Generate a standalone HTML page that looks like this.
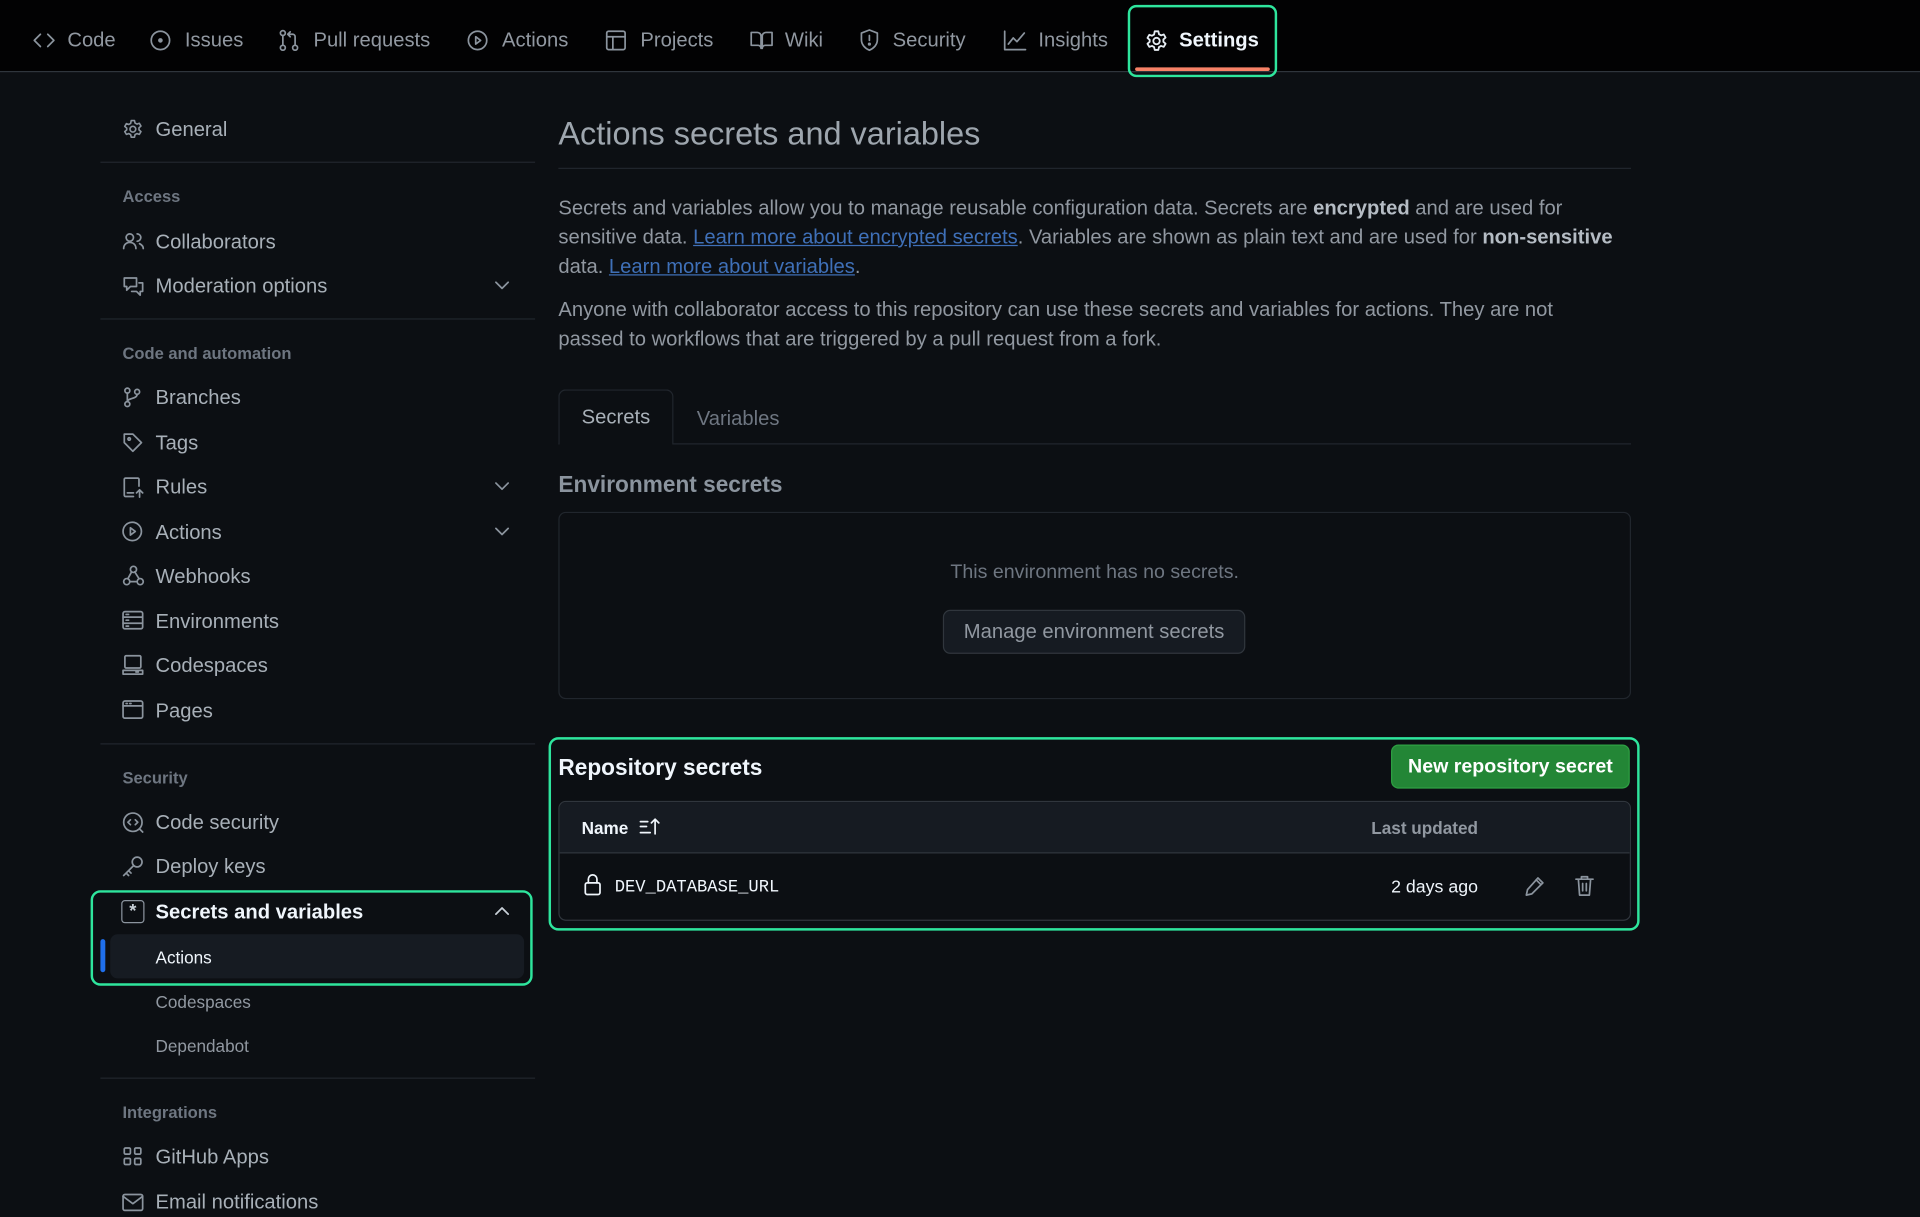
<!DOCTYPE html>
<html><head><meta charset="utf-8"><style>
*{box-sizing:border-box;margin:0;padding:0}
html,body{width:1920px;height:1200px;overflow:hidden;background:#0c0f13}
#w{position:absolute;left:0;top:0;width:1568px;height:980px;transform:scale(1.22449);transform-origin:0 0;background:#0c0f13;font-family:"Liberation Sans",sans-serif;color:#9198a1;font-size:16px}
.a{position:absolute;white-space:nowrap}
.nav{position:absolute;left:0;top:0;width:1568px;height:59px;background:#020203;border-bottom:1px solid #30363d}
.ni{position:absolute;top:21px;height:24px;line-height:24px;font-size:16.5px;color:#9198a1}
svg{position:absolute;fill:none;stroke:#8b949e;stroke-width:1.4;stroke-linecap:round;stroke-linejoin:round}
.si{position:absolute;left:127px;height:24px;line-height:24px;font-size:16.5px;color:#a8b0b8}
.sh{position:absolute;left:100px;font-size:13.5px;color:#6e7681;font-weight:bold;height:20px;line-height:20px}
.dv{position:absolute;left:82px;width:355px;height:1px;background:#21262d}
.sub{position:absolute;left:127px;font-size:14px;color:#9198a1;height:20px;line-height:20px}
.ch{position:absolute;left:403px}
p.t{position:absolute;left:456px;width:880px;line-height:24px;font-size:16.5px;color:#9198a1}
p.t b{color:#b5bcc4}
a{color:#3f70b8;text-decoration:underline}
</style></head><body><div id="w">
<div class="nav"></div>
<svg style="left:27px;top:25px" width="18" height="16" viewBox="0 0 18 16"><path d="M6 3L1 8l5 5M12 3l5 5-5 5"/></svg>
<div class="ni" style="left:55px">Code</div>
<svg style="left:122px;top:24px" width="18" height="18" viewBox="0 0 18 18"><circle cx="9" cy="9" r="7.5"/><circle cx="9" cy="9" r="1.2" fill="#8b949e"/></svg>
<div class="ni" style="left:151px">Issues</div>
<svg style="left:227px;top:24px" width="18" height="18" viewBox="0 0 18 18"><circle cx="4" cy="3" r="2"/><circle cx="4" cy="15" r="2"/><circle cx="14" cy="15" r="2"/><path d="M4 5v8M14 13V6a2 2 0 0 0-2-2H9M10 2L8 4l2 2"/></svg>
<div class="ni" style="left:256px">Pull requests</div>
<svg style="left:381px;top:24px" width="18" height="18" viewBox="0 0 18 18"><circle cx="9" cy="9" r="7.5"/><path d="M7.5 6v6l4-3z"/></svg>
<div class="ni" style="left:410px">Actions</div>
<svg style="left:494px;top:24px" width="18" height="18" viewBox="0 0 18 18"><rect x="1.5" y="1.5" width="15" height="15" rx="1.5"/><path d="M1.5 6h15M6.5 6v10.5"/></svg>
<div class="ni" style="left:523px">Projects</div>
<svg style="left:612px;top:24px" width="20" height="18" viewBox="0 0 20 18"><path d="M1.5 2.5h5a3 3 0 0 1 3 3v10a2.5 2.5 0 0 0-2.5-2.5h-5.5zM18.5 2.5h-5a3 3 0 0 0-3 3v10a2.5 2.5 0 0 1 2.5-2.5h5.5z"/></svg>
<div class="ni" style="left:641px">Wiki</div>
<svg style="left:701px;top:23px" width="18" height="20" viewBox="0 0 18 20"><path d="M9 1.5l6.5 2.5v5.5c0 4-3 7-6.5 8.5-3.5-1.5-6.5-4.5-6.5-8.5V4z M9 6v4"/><circle cx="9" cy="13" r=".6" fill="#8b949e"/></svg>
<div class="ni" style="left:729px">Security</div>
<svg style="left:819px;top:24px" width="20" height="18" viewBox="0 0 20 18"><path d="M1.5 1.5v15h17M4.5 12l4-5 3 3 6-7"/></svg>
<div class="ni" style="left:848px">Insights</div>
<div class="a" style="left:921px;top:4px;width:122px;height:59px;border:2px solid #2ee59d;border-radius:7px"></div>
<div class="a" style="left:927px;top:55px;width:110px;height:3px;background:#f78166;border-radius:2px"></div>
<svg style="left:935px;top:24px" width="19" height="19" viewBox="0 0 18 18"><circle cx="9" cy="9" r="2.5" stroke="#e6edf3"/><path stroke="#e6edf3" d="M7.6 1.5h2.8l.5 2.2 1.6.9 2.1-.7 1.4 2.4-1.7 1.5v1.8l1.7 1.5-1.4 2.4-2.1-.7-1.6.9-.5 2.2H7.6l-.5-2.2-1.6-.9-2.1.7-1.4-2.4 1.7-1.5V8.1L2 6.6l1.4-2.4 2.1.7 1.6-.9z"/></svg>
<div class="ni" style="left:963px;color:#f0f6fc;font-weight:bold">Settings</div>

<svg style="left:100px;top:97px" width="17" height="17" viewBox="0 0 18 18"><circle cx="9" cy="9" r="2.5"/><path d="M7.6 1.5h2.8l.5 2.2 1.6.9 2.1-.7 1.4 2.4-1.7 1.5v1.8l1.7 1.5-1.4 2.4-2.1-.7-1.6.9-.5 2.2H7.6l-.5-2.2-1.6-.9-2.1.7-1.4-2.4 1.7-1.5V8.1L2 6.6l1.4-2.4 2.1.7 1.6-.9z"/></svg>
<div class="si" style="top:94px">General</div>
<div class="dv" style="top:132px"></div>
<div class="sh" style="top:151px">Access</div>
<svg style="left:100px;top:189px" width="18" height="16" viewBox="0 0 18 16"><circle cx="6" cy="5" r="3"/><path d="M1 14c0-3 2-5 5-5s5 2 5 5M12 2a3 3 0 0 1 0 6M14 10c2 1 3 2 3 4"/></svg>
<div class="si" style="top:186px">Collaborators</div>
<svg style="left:100px;top:225px" width="18" height="17" viewBox="0 0 18 17"><path d="M1.5 2h10v7h-5l-3 3V9h-2zM13.5 6h3v7h-2v3l-3-3h-4"/></svg>
<div class="si" style="top:222px">Moderation options</div>
<svg class="ch" style="top:228px" width="14" height="10" viewBox="0 0 14 10"><path d="M2 2.5l5 5 5-5"/></svg>
<div class="dv" style="top:260px"></div>
<div class="sh" style="top:279px">Code and automation</div>
<svg style="left:100px;top:316px" width="16" height="17" viewBox="0 0 16 17"><circle cx="4" cy="3" r="2"/><circle cx="4" cy="14" r="2"/><circle cx="12" cy="4" r="2"/><path d="M4 5v7M12 6c0 4-8 3-8 6"/></svg>
<div class="si" style="top:313px">Branches</div>
<svg style="left:100px;top:353px" width="17" height="17" viewBox="0 0 17 17"><path d="M1.5 1.5h7l7 7-7 7-7-7z"/><circle cx="5.5" cy="5.5" r="1"/></svg>
<div class="si" style="top:350px">Tags</div>
<svg style="left:100px;top:389px" width="18" height="18" viewBox="0 0 18 18"><path d="M9 16.5H2.5a1 1 0 0 1-1-1v-13a1 1 0 0 1 1-1h10a1 1 0 0 1 1 1V8M4 13.5h5M14 11v6M11.5 13.5L14 11l2.5 2.5"/></svg>
<div class="si" style="top:386px">Rules</div>
<svg class="ch" style="top:392px" width="14" height="10" viewBox="0 0 14 10"><path d="M2 2.5l5 5 5-5"/></svg>
<svg style="left:99px;top:425px" width="18" height="18" viewBox="0 0 18 18"><circle cx="9" cy="9" r="7.5"/><path d="M7.5 6v6l4-3z"/></svg>
<div class="si" style="top:423px">Actions</div>
<svg class="ch" style="top:429px" width="14" height="10" viewBox="0 0 14 10"><path d="M2 2.5l5 5 5-5"/></svg>
<svg style="left:100px;top:461px" width="18" height="18" viewBox="0 0 18 18"><circle cx="9" cy="4" r="2.5"/><circle cx="3.5" cy="14" r="2.5"/><circle cx="14.5" cy="14" r="2.5"/><path d="M7.5 6L4.5 11.5M11 14H6M10 6l3.5 5.5"/></svg>
<div class="si" style="top:459px">Webhooks</div>
<svg style="left:99px;top:498px" width="19" height="17" viewBox="0 0 19 17"><rect x="1.5" y="1.5" width="16" height="14" rx="1.5"/><path d="M1.5 6h16M1.5 11h16M4 3.8h2M4 8.5h2M4 13.3h2"/></svg>
<div class="si" style="top:496px">Environments</div>
<svg style="left:99px;top:534px" width="19" height="18" viewBox="0 0 19 18"><rect x="3" y="1.5" width="13" height="10" rx="1"/><path d="M1.5 16.5h16v-3h-16zM12 14.8h2"/></svg>
<div class="si" style="top:532px">Codespaces</div>
<svg style="left:99px;top:571px" width="19" height="17" viewBox="0 0 19 17"><rect x="1.5" y="1.5" width="16" height="14" rx="1.5"/><path d="M1.5 5.5h16M4 3.5h1M7 3.5h1"/></svg>
<div class="si" style="top:569px">Pages</div>
<div class="dv" style="top:607px"></div>
<div class="sh" style="top:626px">Security</div>
<svg style="left:99px;top:662px" width="19" height="19" viewBox="0 0 19 19"><circle cx="9.5" cy="9.5" r="7.5"/><path d="M7.5 7.5l-2 2 2 2M11.5 7.5l2 2-2 2M15 15l2.5 2.5"/></svg>
<div class="si" style="top:660px">Code security</div>
<svg style="left:99px;top:698px" width="19" height="19" viewBox="0 0 19 19"><circle cx="13" cy="6" r="4"/><path d="M10 9l-8 8M4 15l2 2M6 13l2 2"/></svg>
<div class="si" style="top:696px">Deploy keys</div>
<div class="a" style="left:74px;top:727px;width:361px;height:78px;border:2px solid #2ee59d;border-radius:8px"></div>
<div class="a" style="left:90px;top:763px;width:338px;height:36px;background:#161b22;border-radius:6px"></div>
<div class="a" style="left:82px;top:767px;width:4px;height:27px;background:#1f6feb;border-radius:2px"></div>
<div class="a" style="left:99px;top:735px;width:19px;height:19px;border:1.5px solid #8b949e;border-radius:3px;color:#c9d1d9;font-size:15px;line-height:18px;text-align:center;font-weight:bold">*</div>
<div class="si" style="top:733px;color:#f0f6fc;font-weight:bold">Secrets and variables</div>
<svg class="ch" style="top:739px" width="14" height="10" viewBox="0 0 14 10"><path d="M2 7.5l5-5 5 5" stroke="#c9d1d9"/></svg>
<div class="sub" style="top:772px;color:#f0f6fc">Actions</div>
<div class="sub" style="top:808px">Codespaces</div>
<div class="sub" style="top:844px">Dependabot</div>
<div class="dv" style="top:880px"></div>
<div class="sh" style="top:899px">Integrations</div>
<svg style="left:100px;top:936px" width="17" height="17" viewBox="0 0 17 17"><rect x="1.5" y="1.5" width="5" height="5" rx="1"/><rect x="10" y="1.5" width="5" height="5" rx="1"/><rect x="1.5" y="10" width="5" height="5" rx="1"/><rect x="10" y="10" width="5" height="5" rx="1"/></svg>
<div class="si" style="top:933px">GitHub Apps</div>
<svg style="left:99px;top:974px" width="19" height="16" viewBox="0 0 19 16"><rect x="1.5" y="1.5" width="16" height="13" rx="1.5"/><path d="M1.5 3l8 6 8-6"/></svg>
<div class="si" style="top:970px">Email notifications</div>

<div class="a" style="left:456px;top:92px;font-size:26.5px;color:#9ea6ae;line-height:34px">Actions secrets and variables</div>
<div class="a" style="left:456px;top:137px;width:876px;height:1px;background:#21262d"></div>
<p class="t" style="top:158px">Secrets and variables allow you to manage reusable configuration data. Secrets are <b>encrypted</b> and are used for sensitive data. <a>Learn more about encrypted secrets</a>. Variables are shown as plain text and are used for <b>non-sensitive</b> data. <a>Learn more about variables</a>.</p>
<p class="t" style="top:241px;width:840px">Anyone with collaborator access to this repository can use these secrets and variables for actions. They are not passed to workflows that are triggered by a pull request from a fork.</p>
<div class="a" style="left:456px;top:362px;width:876px;height:1px;background:#21262d"></div>
<div class="a" style="left:456px;top:318px;width:94px;height:45px;border:1px solid #21262d;border-bottom:none;border-radius:6px 6px 0 0;background:#0c0f13;color:#a8b0b8;text-align:center;line-height:44px;font-size:16.5px">Secrets</div>
<div class="a" style="left:569px;top:330px;font-size:16.5px;color:#6e7681;line-height:24px">Variables</div>
<div class="a" style="left:456px;top:384px;font-size:18.5px;font-weight:bold;color:#8b949e;line-height:24px">Environment secrets</div>
<div class="a" style="left:456px;top:418px;width:876px;height:153px;border:1px solid #21262d;border-radius:6px"></div>
<div class="a" style="left:456px;top:457px;width:876px;text-align:center;font-size:16px;color:#6e7681;line-height:22px">This environment has no secrets.</div>
<div class="a" style="left:770px;top:498px;width:247px;height:36px;border:1px solid #30363d;border-radius:6px;background:#161b22;text-align:center;line-height:35px;font-size:16.5px;color:#9198a1">Manage environment secrets</div>
<div class="a" style="left:448px;top:602px;width:891px;height:158px;border:2px solid #2ee59d;border-radius:8px"></div>
<div class="a" style="left:456px;top:615px;font-size:18.5px;font-weight:bold;color:#f0f6fc;line-height:24px">Repository secrets</div>
<div class="a" style="left:1136px;top:608px;width:195px;height:36px;background:#238636;border:1px solid #2ea043;border-radius:6px;color:#fff;font-weight:bold;font-size:16px;text-align:center;line-height:36px">New repository secret</div>
<div class="a" style="left:456px;top:654px;width:876px;height:98px;border:1px solid #30363d;border-radius:6px;overflow:hidden">
 <div style="height:42px;background:#161b22;border-bottom:1px solid #30363d"></div>
</div>
<div class="a" style="left:475px;top:666px;font-size:14px;font-weight:bold;color:#f0f6fc;line-height:20px">Name</div>
<svg style="left:522px;top:668px" width="20" height="14" viewBox="0 0 20 14"><path d="M1 3h6M1 7h5M1 12h8M13 13V1M10 4l3-3 3 3" stroke="#f0f6fc"/></svg>
<div class="a" style="left:1207px;top:666px;transform:translateX(-100%);font-size:14px;font-weight:bold;color:#9198a1;line-height:20px">Last updated</div>
<svg style="left:476px;top:713px" width="16" height="19" viewBox="0 0 16 19"><rect x="2" y="8" width="12" height="9.5" rx="1.5" stroke="#f0f6fc"/><path d="M4.5 8V5a3.5 3.5 0 0 1 7 0v3" stroke="#f0f6fc"/></svg>
<div class="a" style="left:502px;top:715px;font-family:'Liberation Mono',monospace;font-size:14px;color:#f0f6fc;line-height:20px">DEV_DATABASE_URL</div>
<div class="a" style="left:1207px;top:715px;transform:translateX(-100%);font-size:14.5px;color:#f0f6fc;line-height:20px">2 days ago</div>
<svg style="left:1244px;top:715px" width="18" height="18" viewBox="0 0 18 18"><path d="M12 2l4 4-9 9-4.5 1 1-4.5z M10.5 3.5l4 4"/></svg>
<svg style="left:1286px;top:714px" width="16" height="19" viewBox="0 0 16 19"><path d="M1 4h14M5.5 4V2h5v2M3 4l1 13h8l1-13M6.5 7.5v6M9.5 7.5v6"/></svg>
</div></body></html>
